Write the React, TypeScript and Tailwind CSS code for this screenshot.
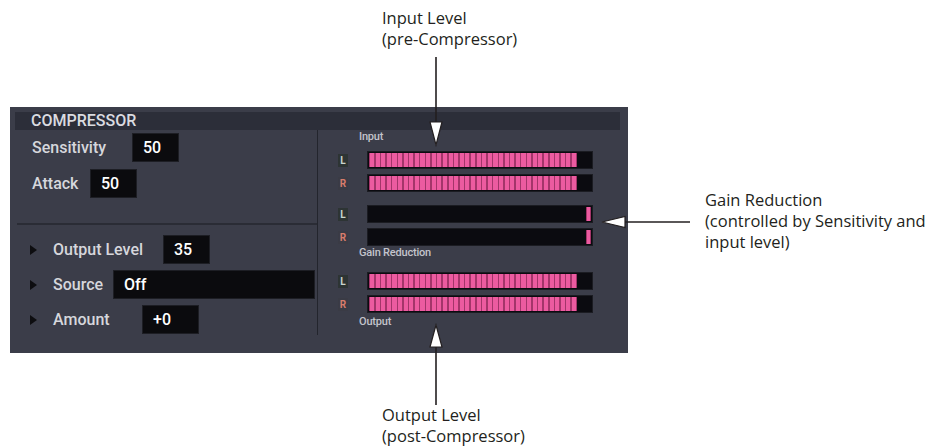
import React from "react";

const SEGMENTS = Array.from({ length: 37 }, (_, i) => i);

function Chevron() {
  return (
    <svg width="7" height="10" viewBox="0 0 7 10" className="shrink-0">
      <polygon points="0,0 7,5 0,10" fill="#0d0d10" />
    </svg>
  );
}

function ValueBox({ value, width }: { value: string; width: string }) {
  return (
    <div
      className={`${width} h-[29px] bg-[#0b0b0e] border border-[#1d1e24] flex items-center pl-[10px] text-white text-[16px] font-medium`}
    >
      {value}
    </div>
  );
}

function Meter({ kind }: { kind: "level" | "gain" }) {
  return (
    <div className="w-[226px] h-[18px] bg-[#0b0b10] border border-[#1b1c22] p-px flex justify-start">
      {kind === "level" ? (
        <div className="w-[208px] h-full bg-[#a3356a] flex gap-[1.5px] px-px">
          {SEGMENTS.map((i) => (
            <div key={i} className="flex-1 h-full bg-[#ec5ba0]" />
          ))}
        </div>
      ) : (
        <div className="ml-auto w-[5px] h-full bg-[#ec5ba0] border-x border-[#a3356a]" />
      )}
    </div>
  );
}

function MeterPair({ kind }: { kind: "level" | "gain" }) {
  return (
    <div className="flex flex-col gap-[5px]">
      <div className="flex items-center pl-[20px]">
        <span className="w-[10px] h-[13px] bg-[#2d3434] text-[#c9d4cd] text-[10px] font-bold leading-[13px] text-center">
          L
        </span>
        <div className="ml-[19px]">
          <Meter kind={kind} />
        </div>
      </div>
      <div className="flex items-center pl-[20px]">
        <span className="w-[10px] h-[13px] bg-[#3a3b45] text-[#d77c6c] text-[10px] font-bold leading-[13px] text-center">
          R
        </span>
        <div className="ml-[19px]">
          <Meter kind={kind} />
        </div>
      </div>
    </div>
  );
}

function SmallLabel({ children, className }: { children: React.ReactNode; className: string }) {
  return (
    <div
      className={`h-[12px] pl-[41px] text-[11px] leading-[12px] font-medium tracking-[-0.2px] text-[#c3c4cc] ${className}`}
    >
      {children}
    </div>
  );
}

function CompressorPanel() {
  return (
    <div className="w-[618px] h-[246px] bg-[#3b3d49] flex flex-col font-['Roboto',sans-serif]">
      {/* Header */}
      <div className="ml-[5px] mt-[5px] w-[605px] h-[18px] bg-[#2c2e39] pl-[16px] text-[16px] leading-[18px] font-medium text-[#dadbe0]">
        COMPRESSOR
      </div>

      <div className="flex h-[205px]">
        {/* Left column */}
        <div className="w-[307px] flex flex-col">
          <div className="mt-[3px] flex flex-col gap-[7px] pl-[22px] text-[16px] font-medium text-[#d6d7dc]">
            <div className="flex items-center">
              <span className="w-[100px]">Sensitivity</span>
              <ValueBox value="50" width="w-[47px]" />
            </div>
            <div className="flex items-center">
              <span className="w-[58px]">Attack</span>
              <ValueBox value="50" width="w-[47px]" />
            </div>
          </div>

          <div className="mt-[25px] ml-[7px] h-[2px] bg-[#2a2c35]" />

          <div className="mt-[10px] flex flex-col gap-[6px] pl-[20px] text-[16px] font-medium text-[#d6d7dc]">
            <div className="flex items-center">
              <Chevron />
              <span className="ml-[16px] w-[110px]">Output Level</span>
              <ValueBox value="35" width="w-[47px]" />
            </div>
            <div className="flex items-center">
              <Chevron />
              <span className="ml-[16px] w-[60px]">Source</span>
              <ValueBox value="Off" width="w-[202px]" />
            </div>
            <div className="flex items-center">
              <Chevron />
              <span className="ml-[16px] w-[89px]">Amount</span>
              <ValueBox value="+0" width="w-[57px]" />
            </div>
          </div>
        </div>

        <div className="w-px bg-[#23252d]" />

        {/* Right column: meters */}
        <div className="flex-1 flex flex-col">
          <SmallLabel className="mt-[1px]">Input</SmallLabel>
          <div className="mt-[8px]">
            <MeterPair kind="level" />
          </div>
          <div className="mt-[13px]">
            <MeterPair kind="gain" />
          </div>
          <SmallLabel className="mt-[1px]">Gain Reduction</SmallLabel>
          <div className="mt-[13px]">
            <MeterPair kind="level" />
          </div>
          <SmallLabel className="mt-[3px]">Output</SmallLabel>
        </div>
      </div>
    </div>
  );
}

export default function App() {
  return (
    <div className="relative w-[930px] h-[448px] bg-white overflow-hidden">
      <div className="pt-[107px] pl-[10px]">
        <CompressorPanel />
      </div>

      {/* Callouts */}
      <div className="absolute left-[382px] top-[7px] text-[16.5px] leading-[21px] text-[#231f20] font-['Open_Sans',sans-serif]">
        <div>Input Level</div>
        <div>(pre-Compressor)</div>
      </div>
      <svg className="absolute left-[428px] top-[55px]" width="16" height="92" viewBox="0 0 16 92">
        <line x1="8" y1="2" x2="8" y2="67" stroke="#231f20" strokeWidth="1.6" />
        <polygon points="2,67 14,67 8,90" fill="white" stroke="#231f20" strokeWidth="1.2" />
      </svg>

      <div className="absolute left-[705px] top-[189px] text-[16.5px] leading-[21px] text-[#231f20] font-['Open_Sans',sans-serif]">
        <div>Gain Reduction</div>
        <div>(controlled by Sensitivity and</div>
        <div>input level)</div>
      </div>
      <svg className="absolute left-[600px] top-[213px]" width="92" height="18" viewBox="0 0 92 18">
        <line x1="25" y1="9" x2="90" y2="9" stroke="#231f20" strokeWidth="1.6" />
        <polygon points="2,9 25,3.5 25,14.5" fill="white" stroke="#231f20" strokeWidth="1.2" />
      </svg>

      <svg className="absolute left-[428px] top-[323px]" width="16" height="84" viewBox="0 0 16 84">
        <polygon points="8,2 2,24 14,24" fill="white" stroke="#231f20" strokeWidth="1.2" />
        <line x1="8" y1="24" x2="8" y2="82" stroke="#231f20" strokeWidth="1.6" />
      </svg>
      <div className="absolute left-[382px] top-[404px] text-[16.5px] leading-[21px] text-[#231f20] font-['Open_Sans',sans-serif]">
        <div>Output Level</div>
        <div>(post-Compressor)</div>
      </div>
    </div>
  );
}
